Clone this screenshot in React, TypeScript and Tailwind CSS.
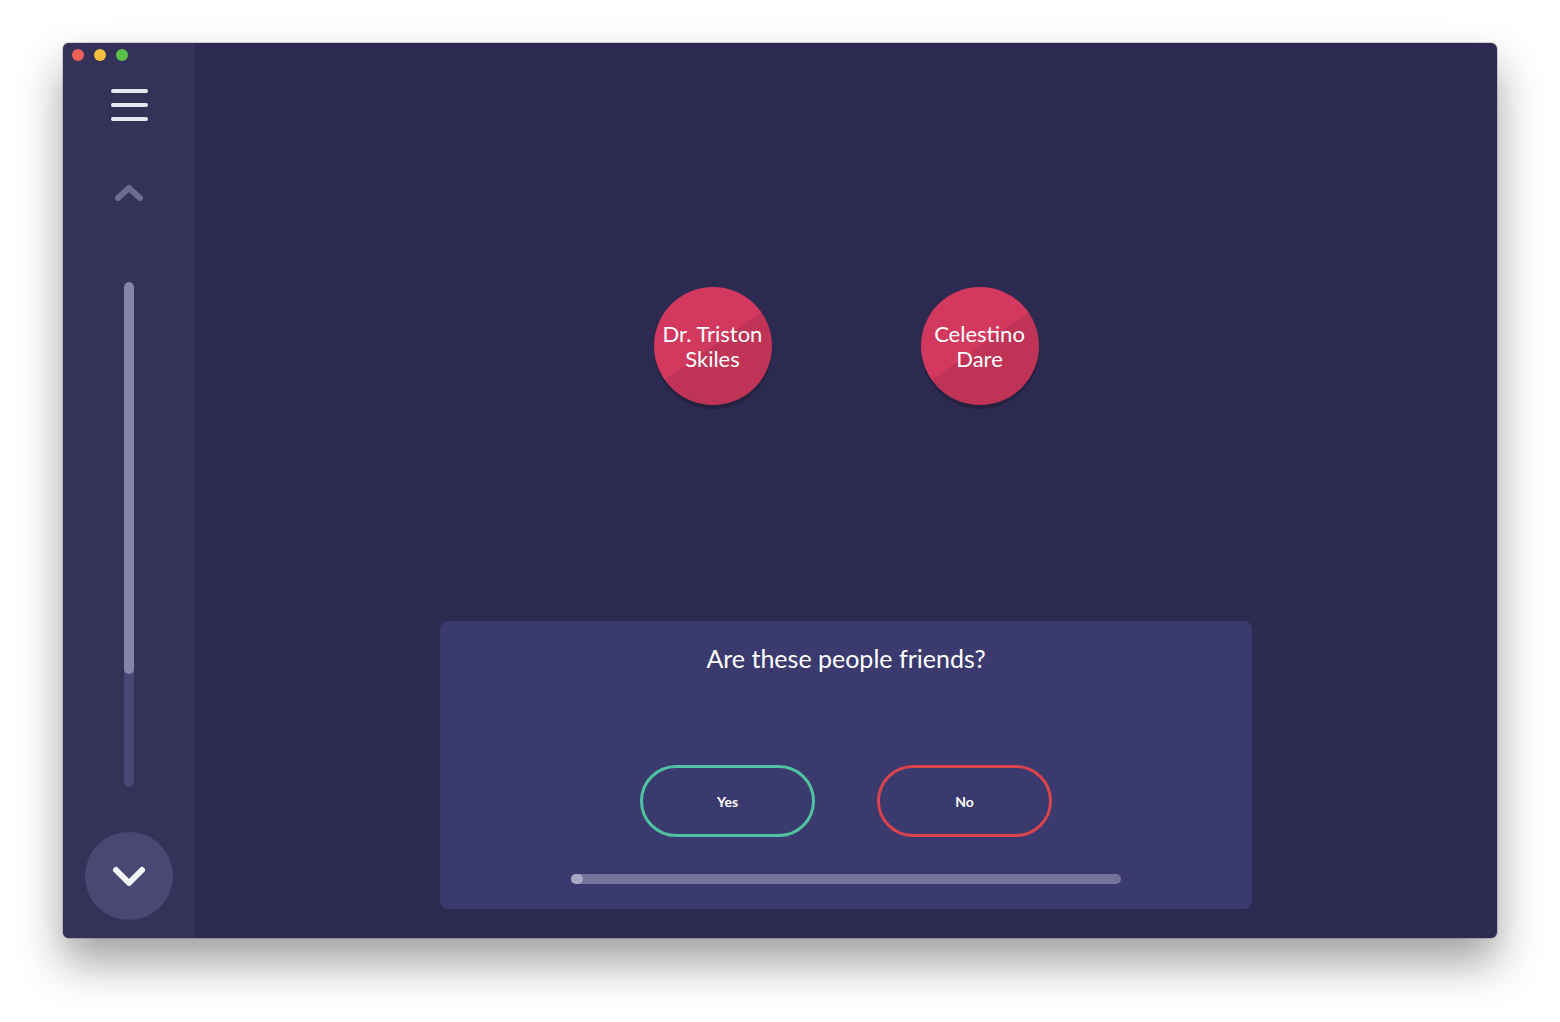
import React from "react";

const font = { fontFamily: "Lato, 'Open Sans', sans-serif" };

function Bubble({ name }: { name: string[] }) {
  return (
    <div className="relative h-[118px] w-[118px] rounded-full bg-[#24223f] pb-0">
      <div className="absolute inset-x-0 top-0 h-[118px] w-[118px] -translate-y-[4px] overflow-hidden rounded-full bg-[linear-gradient(145deg,#d3385f_0%,#d3385f_50%,#bf3356_50%,#bf3356_100%)] flex flex-col items-center justify-center text-white text-[22px] leading-[25px]">
        {name.map((n) => (
          <span key={n}>{n}</span>
        ))}
      </div>
    </div>
  );
}

export default function App() {
  const [answer, setAnswer] = React.useState<string | null>(null);

  return (
    <div className="min-h-screen w-full bg-white pl-[63px] pt-[43px]" style={font}>
      <div className="relative flex h-[895px] w-[1434px] overflow-hidden rounded-[6px] bg-[#2c2a50] shadow-[0_24px_45px_rgba(0,0,0,0.38),0_0_0_1px_rgba(0,0,0,0.15)]">
        {/* traffic lights */}
        <div className="absolute left-[9px] top-[6px] flex gap-[10px]">
          <span className="h-[12px] w-[12px] rounded-full bg-[#ee5f57]" />
          <span className="h-[12px] w-[12px] rounded-full bg-[#f5be3f]" />
          <span className="h-[12px] w-[12px] rounded-full bg-[#5ac149]" />
        </div>

        {/* sidebar */}
        <aside className="flex w-[132px] flex-col items-center bg-[#35325a] pb-[18px] pt-[44px]">
          <button className="flex flex-col gap-[10px] py-[2px]">
            <span className="block h-[4px] w-[37px] rounded-full bg-[#e8e9ee]" />
            <span className="block h-[4px] w-[37px] rounded-full bg-[#e8e9ee]" />
            <span className="block h-[4px] w-[37px] rounded-full bg-[#e8e9ee]" />
          </button>
          <button className="mt-[60px]">
            <svg width="30" height="20" viewBox="0 0 30 20" fill="none">
              <path d="M4 15 L15 5 L26 15" stroke="#6e6b92" strokeWidth="6" strokeLinecap="round" strokeLinejoin="round" />
            </svg>
          </button>
          <div className="mt-[79px] flex h-[505px] w-[10px] flex-col overflow-hidden rounded-full bg-[#4a4776]">
            <div className="h-[392px] w-full rounded-full bg-[#8583a8]" />
          </div>
          <div className="flex-1" />
          <button className="flex h-[88px] w-[88px] items-center justify-center rounded-full bg-[#4a4775]">
            <svg width="36" height="24" viewBox="0 0 36 24" fill="none">
              <path d="M5 6 L18 19 L31 6" stroke="#f2f4f6" strokeWidth="6" strokeLinecap="round" strokeLinejoin="round" />
            </svg>
          </button>
        </aside>

        {/* main */}
        <main className="flex flex-1 flex-col items-center pb-[29px] pt-[248px]">
          <div className="flex gap-[149px]">
            <Bubble name={["Dr. Triston", "Skiles"]} />
            <Bubble name={["Celestino", "Dare"]} />
          </div>
          <div className="flex-1" />
          <section className="flex h-[288px] w-[812px] flex-col items-center rounded-[8px] bg-[#3b3a6e] pt-[21px]">
            <h2 className="text-[25px] leading-[32px] text-white">Are these people friends?</h2>
            <div className="mt-[91px] flex gap-[62px]">
              <button
                onClick={() => setAnswer("yes")}
                className={`h-[72px] w-[175px] rounded-full border-[3px] border-[#4fc3a1] text-[14px] font-bold text-white ${answer === "yes" ? "bg-[#4fc3a1]/20" : ""}`}
              >
                Yes
              </button>
              <button
                onClick={() => setAnswer("no")}
                className={`h-[72px] w-[175px] rounded-full border-[3px] border-[#d9434b] text-[14px] font-bold text-white ${answer === "no" ? "bg-[#d9434b]/20" : ""}`}
              >
                No
              </button>
            </div>
            <div className="mt-[37px] flex h-[10px] w-[550px] items-center rounded-full bg-[#75739c]">
              <span className="h-[10px] w-[12px] rounded-full bg-[#a9a8c5]" />
            </div>
          </section>
        </main>
      </div>
    </div>
  );
}
